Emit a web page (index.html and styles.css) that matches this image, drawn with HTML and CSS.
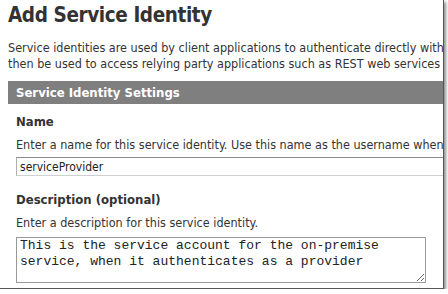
FILE: index.html
```html
<!DOCTYPE html>
<html lang="en">
<head>
    <meta charset="UTF-8">
    <meta name="viewport" content="width=device-width, initial-scale=1.0">
    <title>Add Service Identity</title>
    <link rel="stylesheet" href="styles.css">
</head>
<body>
    <div class="shot">
        <div class="page">
            <h1>Add Service Identity</h1>
            <p class="intro">Service identities are used by client applications to authenticate directly with the service. They can<br>then be used to access relying party applications such as REST web services and other resources.</p>
            <div class="section">
                <div class="section-title">Service Identity Settings</div>
                <div class="form-group">
                    <label for="name">Name</label>
                    <div class="hint">Enter a name for this service identity. Use this name as the username when authenticating.</div>
                    <input type="text" id="name" value="serviceProvider">
                </div>
                <div class="form-group">
                    <label for="desc">Description (optional)</label>
                    <div class="hint">Enter a description for this service identity.</div>
                    <textarea id="desc">This is the service account for the on-premise
service, when it authenticates as a provider</textarea>
                </div>
            </div>
        </div>
    </div>
</body>
</html>
```

FILE: styles.css
```css
body {
    margin: 0;
    background: #fff;
    font-family: "DejaVu Sans Condensed", "DejaVu Sans", sans-serif;
    color: #333;
}
.shot {
    width: 443px;
    height: 288px;
    overflow: hidden;
    background: #fff;
    border-right: 1px solid #555;
    border-bottom: 1px solid #555;
    box-shadow: 2px 2px 3px rgba(0, 0, 0, 0.45);
}
.page {
    width: 700px;
    padding-left: 8px;
}
h1 {
    margin: 0;
    padding-top: 4px;
    font-size: 20.5px;
    line-height: 22px;
    letter-spacing: -0.4px;
    color: #333;
}
.intro {
    margin: 14px 0 0;
    font-size: 12.5px;
    line-height: 16px;
    white-space: nowrap;
}
.section {
    margin-top: 9px;
    width: 436px;
}
.section-title {
    background: #7f7f7f;
    color: #fff;
    font-weight: bold;
    font-size: 13px;
    line-height: 23px;
    padding-left: 8px;
    white-space: nowrap;
}
.form-group {
    padding-left: 8px;
    margin-top: 8px;
}
.form-group + .form-group {
    margin-top: 14px;
}
.form-group label {
    display: block;
    font-weight: bold;
    font-size: 13px;
    line-height: 20px;
}
.hint {
    margin-top: 2px;
    font-size: 12.5px;
    line-height: 22px;
    white-space: nowrap;
}
.form-group input {
    display: block;
    box-sizing: border-box;
    width: 500px;
    height: 19px;
    margin-top: 1px;
    padding: 0 3px;
    border: 1px solid #d0d0d0;
    border-top-color: #8a8a8a;
    border-left-color: #b0b0b0;
    font-family: "DejaVu Sans Condensed", "DejaVu Sans", sans-serif;
    font-size: 12px;
    color: #222;
}
.form-group textarea {
    display: block;
    box-sizing: border-box;
    width: 410px;
    height: 46px;
    margin-top: 3px;
    padding: 0 3px;
    border: 1px solid #999;
    font-family: "Liberation Mono", monospace;
    font-size: 13px;
    line-height: 16px;
    color: #222;
    resize: both;
}
```
